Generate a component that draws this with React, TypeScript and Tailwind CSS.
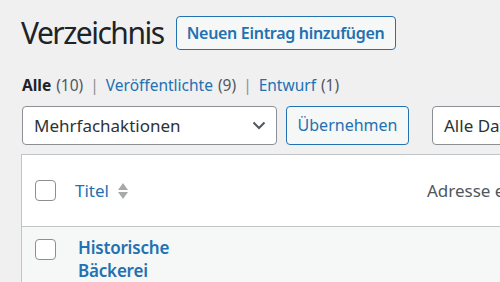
import React from "react";

export default function App() {
  const font = { fontFamily: '"Noto Sans", "Open Sans", sans-serif' };
  return (
    <div
      className="w-[500px] h-[282px] overflow-hidden bg-[#f0f0f1] text-[#1d2327]"
      style={font}
    >
      <div className="w-[900px] pl-[21px] pt-[16px]">
        <div className="flex items-center h-[34px]">
          <h1 className="text-[30px] leading-[34px] font-normal text-[#1d2327] tracking-[-1.5px]">
            Verzeichnis
          </h1>
          <button className="ml-[12px] h-[34px] w-[220px] border border-[#2271b1] rounded-[4px] bg-[#f6f7f7] text-[#2271b1] text-[16px] font-semibold leading-[32px] tracking-[-0.3px]">
            Neuen Eintrag hinzufügen
          </button>
        </div>

        <div className="mt-[24px] flex items-center h-[22px] text-[15.5px] leading-[22px] text-[#50575e]">
          <span className="font-bold text-[#1d2327] ml-[1px]">Alle</span>
          <span className="ml-[5px]">(10)</span>
          <span className="mx-[7px] text-[#8c8f94]">|</span>
          <span className="text-[#2271b1]">Veröffentlichte</span>
          <span className="ml-[5px]">(9)</span>
          <span className="mx-[7px] text-[#8c8f94]">|</span>
          <span className="text-[#2271b1]">Entwurf</span>
          <span className="ml-[5px]">(1)</span>
        </div>

        <div className="mt-[10px] flex items-center h-[39px]">
          <div className="ml-[1px] w-[255px] h-[39px] border border-[#8c8f94] rounded-[4px] bg-white flex items-center justify-between pl-[11px] pr-[9px] text-[17px] text-[#2c3338]">
            <span>Mehrfachaktionen</span>
            <svg width="16" height="16" viewBox="0 0 16 16" className="mb-[1px]">
              <path d="M2.5 5.5 L8 11 L13.5 5.5" fill="none" stroke="#50575e" strokeWidth="2" />
            </svg>
          </div>
          <button className="ml-[9px] w-[123px] h-[39px] border border-[#2271b1] rounded-[4px] bg-[#f6f7f7] text-[#2271b1] text-[16px] leading-[37px]">
            Übernehmen
          </button>
          <div className="ml-[23px] w-[200px] h-[39px] border border-[#8c8f94] rounded-[4px] bg-white flex items-center pl-[11px] text-[17px] text-[#2c3338]">
            Alle Daten
          </div>
        </div>

        <div className="mt-[9px] w-[800px] border border-[#c3c4c7] bg-white">
          <div className="h-[72px] flex items-center border-b border-[#c3c4c7]">
            <div className="ml-[13px] w-[21px] h-[21px] border border-[#8c8f94] rounded-[4px] bg-white" />
            <div className="ml-[19px] flex items-center text-[17px] text-[#2271b1]">
              <span>Titel</span>
              <svg width="12" height="18" viewBox="0 0 12 18" className="ml-[8px]">
                <path d="M6 1 L11 8 L1 8 Z" fill="#a7aaad" />
                <path d="M6 17 L11 10 L1 10 Z" fill="#a7aaad" />
              </svg>
            </div>
            <div className="ml-[298px] text-[17px] text-[#50575e] whitespace-nowrap">Adresse eintragen</div>
          </div>
          <div className="h-[80px] bg-[#f6f7f7] flex items-start pt-[12px]">
            <div className="ml-[13px] w-[21px] h-[21px] border border-[#8c8f94] rounded-[4px] bg-white" />
            <div className="ml-[22px] -mt-[3px] text-[17px] leading-[23px] font-semibold text-[#2271b1] tracking-[-0.2px]">
              Historische
              <br />
              Bäckerei
            </div>
          </div>
        </div>
      </div>
    </div>
  );
}
